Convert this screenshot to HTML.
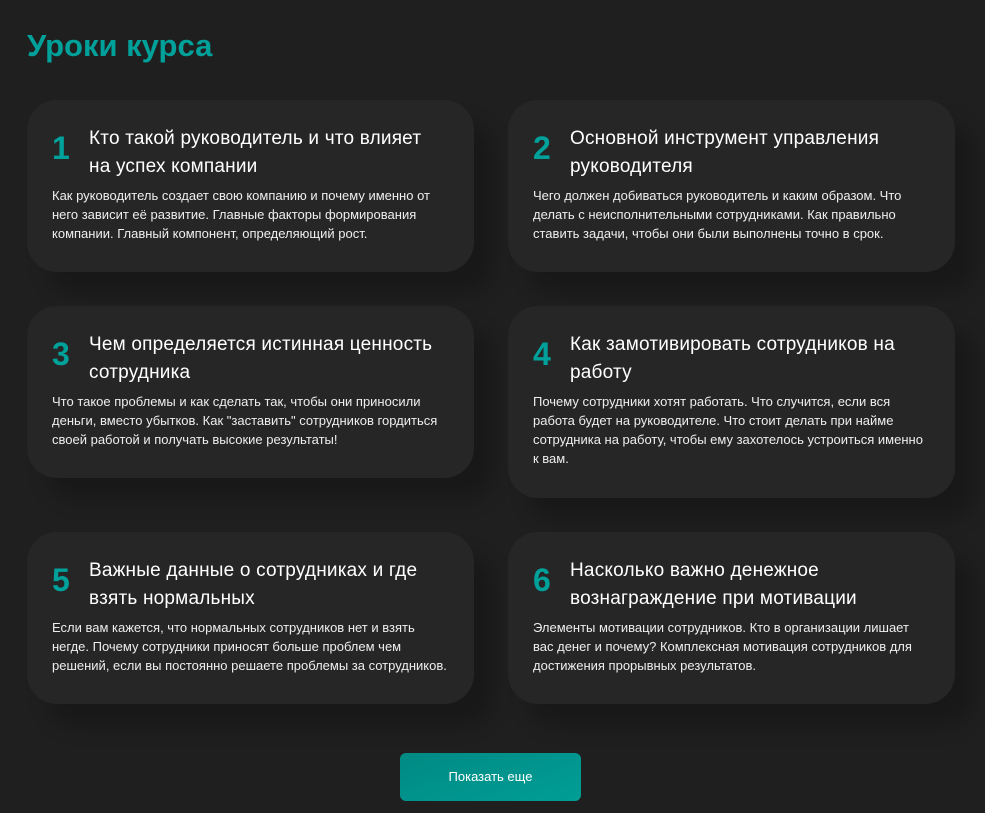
<!DOCTYPE html>
<html><head><meta charset="utf-8"><style>
body{margin:0;background:#1f1f1f;width:985px;height:813px;overflow:hidden;font-family:"Liberation Sans",sans-serif;position:relative}
h1{position:absolute;left:27px;top:28px;margin:0;font-size:31px;font-weight:bold;color:#00a19a}
.card{position:absolute;width:447px;background:#262626;border-radius:30px;box-sizing:border-box;padding:25px 24px 0 25px;box-shadow:20px 22px 20px rgba(0,0,0,0.22)}
.num{position:absolute;left:25px;top:30px;font-size:32px;font-weight:bold;color:#00a19a}
.t{margin-left:37px;margin-right:8px;font-size:19px;letter-spacing:0.2px;line-height:28px;color:#fff;height:60px}
.d{font-size:13px;line-height:19px;color:#eee;margin-top:1px}
.btn{position:absolute;left:400px;top:753px;width:181px;height:48px;border-radius:6px;background:linear-gradient(160deg,#008a84,#009e96);color:#fff;font-size:13px;text-align:center;line-height:48px}
</style></head><body>
<h1>Уроки курса</h1>
<div class="card" style="left:27px;top:100px;height:172px"><div class="num">1</div><div class="t">Кто такой руководитель и что влияет на успех компании</div><div class="d">Как руководитель создает свою компанию и почему именно от него зависит её развитие. Главные факторы формирования компании. Главный компонент, определяющий рост.</div></div>
<div class="card" style="left:508px;top:100px;height:172px"><div class="num">2</div><div class="t">Основной инструмент управления руководителя</div><div class="d">Чего должен добиваться руководитель и каким образом. Что делать с неисполнительными сотрудниками. Как правильно ставить задачи, чтобы они были выполнены точно в срок.</div></div>
<div class="card" style="left:27px;top:306px;height:172px"><div class="num">3</div><div class="t">Чем определяется истинная ценность сотрудника</div><div class="d">Что такое проблемы и как сделать так, чтобы они приносили деньги, вместо убытков. Как "заставить" сотрудников гордиться своей работой и получать высокие результаты!</div></div>
<div class="card" style="left:508px;top:306px;height:192px"><div class="num">4</div><div class="t">Как замотивировать сотрудников на работу</div><div class="d">Почему сотрудники хотят работать. Что случится, если вся работа будет на руководителе. Что стоит делать при найме сотрудника на работу, чтобы ему захотелось устроиться именно к вам.</div></div>
<div class="card" style="left:27px;top:532px;height:172px"><div class="num">5</div><div class="t">Важные данные о сотрудниках и где взять нормальных</div><div class="d">Если вам кажется, что нормальных сотрудников нет и взять негде. Почему сотрудники приносят больше проблем чем решений, если вы постоянно решаете проблемы за сотрудников.</div></div>
<div class="card" style="left:508px;top:532px;height:172px"><div class="num">6</div><div class="t">Насколько важно денежное вознаграждение при мотивации</div><div class="d">Элементы мотивации сотрудников. Кто в организации лишает вас денег и почему? Комплексная мотивация сотрудников для достижения прорывных результатов.</div></div>
<div class="btn">Показать еще</div>
</body></html>
